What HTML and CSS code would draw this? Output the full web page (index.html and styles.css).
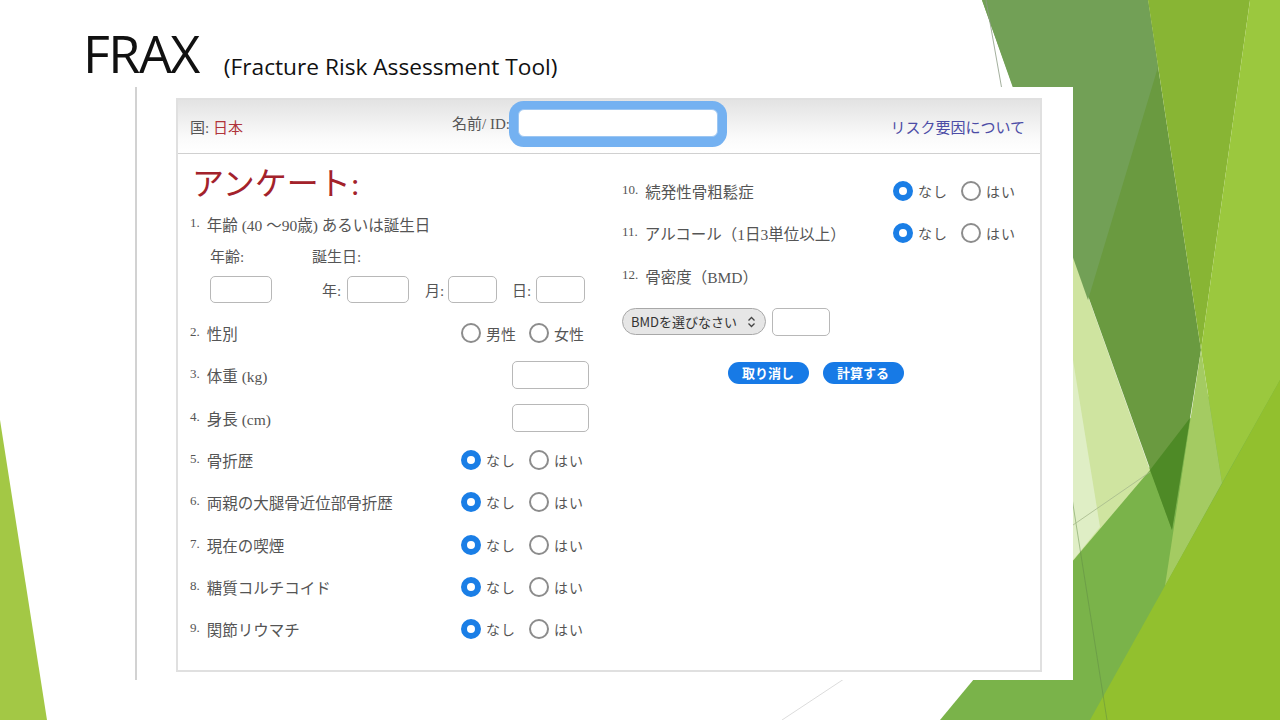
FILE: index.html
```html
<!DOCTYPE html>
<html lang="ja">
<head>
    <meta charset="UTF-8">
    <meta name="viewport" content="width=device-width, initial-scale=1.0">
    <title>FRAX</title>
    <link rel="stylesheet" href="styles.css">
</head>
<body>
<div class="slide">

    <!-- slide theme shapes -->
    <svg class="deco" width="1280" height="720" viewBox="0 0 1280 720">
        <polygon points="0,420 47,720 0,720" fill="#a3c845"/>
        <polygon points="940,720 1280,310 1280,720" fill="#7ab34a"/>
        <polygon points="1060,218 1150,470 1060,576" fill="#cfe4a0"/>
        <polygon points="1073,360 1100,527 1073,560" fill="#dfeec5"/>
        <polygon points="982,0 1148,0 1201,350 1172,530" fill="#6a9a40"/>
        <polygon points="982,0 1148,0 1158,67 1088,300" fill="#72a056"/>
        <polygon points="1150,470 1190,418 1172,530" fill="#4e8a26"/>
        <polygon points="1148,0 1250,0 1201,350" fill="#88b534"/>
        <polygon points="1250,0 1280,0 1280,380 1222,483 1201,350" fill="#9bc83e"/>
        <polygon points="1201,350 1222,483 1165,586" fill="#a4cb62"/>
        <polygon points="1090,720 1280,380 1280,720" fill="#92c02e"/>
        <line x1="986" y1="0" x2="1002" y2="90" stroke="#8c9a84" stroke-width="0.8"/>
        <line x1="1066" y1="460" x2="1107" y2="720" stroke="#5f8a45" stroke-width="0.8" stroke-opacity="0.6"/>
        <line x1="1060" y1="534" x2="1150" y2="472" stroke="#a6b98c" stroke-width="0.8"/>
        <line x1="782" y1="720" x2="850" y2="675" stroke="#dcdcdc" stroke-width="1"/>
    </svg>

    <div class="slide-title">
        <span class="frax">FRAX</span><span class="subtitle">(Fracture Risk Assessment Tool)</span>
    </div>

    <div class="shot">
        <div class="panel">
            <div class="panel-head">
                <div class="country">国: <span class="red">日本</span></div>
                <div class="name">
                    <span>名前/ ID:</span>
                    <input type="text" class="name-input">
                </div>
                <a class="risk">リスク要因について</a>
            </div>

            <div class="panel-body">
                <!-- left column -->
                <div class="col col-left">
                    <div class="survey-title">アンケート:</div>

                    <div class="q q1"><span class="label"><span class="num">1.</span>年齢 (40 〜90歳) あるいは誕生日</span></div>
                    <div class="sub-labels">
                        <span class="age-label">年齢:</span>
                        <span>誕生日:</span>
                    </div>
                    <div class="date-row">
                        <span class="box w62"></span>
                        <span class="dl dl-year">年:</span><span class="box w62"></span>
                        <span class="dl dl-month">月:</span><span class="box w49"></span>
                        <span class="dl dl-day">日:</span><span class="box w49"></span>
                    </div>

                    <div class="rows">
                        <div class="q">
                            <span class="label"><span class="num">2.</span>性別</span>
                            <div class="choices big">
                                <span class="choice"><span class="radio"></span>男性</span>
                                <span class="choice"><span class="radio"></span>女性</span>
                            </div>
                        </div>
                        <div class="q">
                            <span class="label"><span class="num">3.</span>体重 (kg)</span>
                            <span class="box w77"></span>
                        </div>
                        <div class="q">
                            <span class="label"><span class="num">4.</span>身長 (cm)</span>
                            <span class="box w77"></span>
                        </div>
                        <div class="q">
                            <span class="label"><span class="num">5.</span>骨折歴</span>
                            <div class="choices">
                                <span class="choice"><span class="radio on"></span>なし</span>
                                <span class="choice"><span class="radio"></span>はい</span>
                            </div>
                        </div>
                        <div class="q">
                            <span class="label"><span class="num">6.</span>両親の大腿骨近位部骨折歴</span>
                            <div class="choices">
                                <span class="choice"><span class="radio on"></span>なし</span>
                                <span class="choice"><span class="radio"></span>はい</span>
                            </div>
                        </div>
                        <div class="q">
                            <span class="label"><span class="num">7.</span>現在の喫煙</span>
                            <div class="choices">
                                <span class="choice"><span class="radio on"></span>なし</span>
                                <span class="choice"><span class="radio"></span>はい</span>
                            </div>
                        </div>
                        <div class="q">
                            <span class="label"><span class="num">8.</span>糖質コルチコイド</span>
                            <div class="choices">
                                <span class="choice"><span class="radio on"></span>なし</span>
                                <span class="choice"><span class="radio"></span>はい</span>
                            </div>
                        </div>
                        <div class="q">
                            <span class="label"><span class="num">9.</span>関節リウマチ</span>
                            <div class="choices">
                                <span class="choice"><span class="radio on"></span>なし</span>
                                <span class="choice"><span class="radio"></span>はい</span>
                            </div>
                        </div>
                    </div>
                </div>

                <!-- right column -->
                <div class="col col-right">
                    <div class="q">
                        <span class="label"><span class="num">10.</span>続発性骨粗鬆症</span>
                        <div class="choices">
                            <span class="choice"><span class="radio on"></span>なし</span>
                            <span class="choice"><span class="radio"></span>はい</span>
                        </div>
                    </div>
                    <div class="q">
                        <span class="label"><span class="num">11.</span>アルコール（1日3単位以上）</span>
                        <div class="choices">
                            <span class="choice"><span class="radio on"></span>なし</span>
                            <span class="choice"><span class="radio"></span>はい</span>
                        </div>
                    </div>
                    <div class="q">
                        <span class="label"><span class="num">12.</span>骨密度（BMD）</span>
                    </div>

                    <div class="bmd-row">
                        <div class="bmd-select">
                            <span>BMDを選びなさい</span>
                            <svg width="9" height="12" viewBox="0 0 9 12"><path d="M1.5 4.5 L4.5 1.5 L7.5 4.5 M1.5 7.5 L4.5 10.5 L7.5 7.5" fill="none" stroke="#444" stroke-width="1.3"/></svg>
                        </div>
                        <span class="box w58"></span>
                    </div>

                    <div class="actions">
                        <button class="btn">取り消し</button>
                        <button class="btn">計算する</button>
                    </div>
                </div>
            </div>
        </div>
    </div>
</div>
</body>
</html>
```

FILE: styles.css
```css
body {
    margin: 0;
    padding: 0;
    background-color: #fff;
}
.slide {
    width: 1280px;
    height: 720px;
    position: relative;
    overflow: hidden;
    background-color: #fff;
    font-family: "Liberation Serif", "Noto Sans CJK JP", serif;
}
.deco {
    position: absolute;
    left: 0;
    top: 0;
}
.slide-title {
    position: relative;
    height: 87px;
    box-sizing: border-box;
    padding: 22px 0 0 83px;
    font-family: "Open Sans", Lato, sans-serif;
    font-size: 52px;
    line-height: 62px;
    color: #111;
    white-space: nowrap;
}
.frax {
    letter-spacing: -1.5px;
}
.subtitle {
    font-size: 22.7px;
    margin-left: 25px;
    vertical-align: -2px;
}
.shot {
    position: relative;
    margin-left: 135px;
    width: 938px;
    height: 593px;
    box-sizing: border-box;
    border-left: 2px solid #d2d2d2;
    background-color: #fff;
    padding: 11px 0 0 39px;
}
.panel {
    width: 866px;
    height: 574px;
    box-sizing: border-box;
    border: 2px solid #e0e0e0;
}
.panel-head {
    height: 54px;
    box-sizing: border-box;
    border-bottom: 1px solid #d0d0d0;
    background: linear-gradient(#e3e3e3, #fafafa 70%, #fff);
    display: grid;
    grid-template-columns: 262px auto 1fr;
    align-items: center;
    padding: 0 15px 0 12px;
    font-size: 15px;
    color: #555;
}
.red {
    color: #b0343a;
}
.name {
    display: flex;
    align-items: center;
    margin-bottom: 8px;
}
.name-input {
    width: 200px;
    height: 28px;
    box-sizing: border-box;
    margin: 0 0 0 8px;
    border: 1px solid #9cc6f2;
    border-radius: 6px;
    background: #fff;
    box-shadow: 0 1px 0 9px #74b1f1;
    outline: none;
}
.risk {
    justify-self: end;
    color: #4c4ca6;
    text-decoration: none;
}
.panel-body {
    display: grid;
    grid-template-columns: 399px 399px;
    column-gap: 33px;
    padding-left: 12px;
    color: #555;
    font-size: 15.5px;
}
.survey-title {
    font-size: 32px;
    line-height: 40px;
    color: #a3222b;
    margin: 10px 0 0 2px;
}
.q {
    display: flex;
    align-items: center;
    justify-content: space-between;
    height: 42.3px;
}
.q1 {
    height: 28px;
    margin-top: 6px;
}
.num {
    font-size: 13px;
    vertical-align: 4px;
    margin-right: 7px;
}
.sub-labels {
    display: flex;
    height: 24px;
    align-items: center;
    margin-top: 5px;
    padding-left: 20px;
    font-size: 15px;
}
.age-label {
    width: 102px;
}
.date-row {
    display: flex;
    align-items: center;
    margin-top: 9px;
    padding-left: 20px;
    font-size: 15px;
}
.dl {
    width: 25px;
}
.dl-year {
    margin-left: 50px;
}
.dl-month {
    margin-left: 16px;
    width: 23px;
}
.dl-day {
    margin-left: 15px;
    width: 24px;
}
.rows {
    margin-top: 9px;
}
.box {
    display: inline-block;
    height: 28px;
    box-sizing: border-box;
    border: 1px solid #b8b8b8;
    border-radius: 5px;
    background: #fff;
}
.date-row .box {
    height: 27px;
}
.w49 { width: 49px; }
.w58 { width: 58px; }
.w62 { width: 62px; }
.w77 { width: 77px; }
.choices {
    display: flex;
    width: 128px;
    font-size: 14px;
    letter-spacing: 1px;
}
.choices.big {
    font-size: 15px;
    letter-spacing: 0;
}
.choice {
    display: flex;
    align-items: center;
    gap: 5px;
}
.choice:first-child {
    width: 68px;
}
.radio {
    width: 20px;
    height: 20px;
    box-sizing: border-box;
    border: 2px solid #8c8c8c;
    border-radius: 50%;
    background: #fff;
    flex: none;
}
.radio.on {
    border: 6px solid #1a7ee6;
}
.col-right {
    padding-top: 16px;
}
.bmd-row {
    display: flex;
    align-items: center;
    gap: 6px;
    margin-top: 11px;
}
.bmd-select {
    width: 144px;
    height: 27px;
    box-sizing: border-box;
    border: 1px solid #a8a8a8;
    border-radius: 14px;
    background: #e6e6e6;
    display: flex;
    align-items: center;
    justify-content: space-between;
    padding: 0 9px 0 8px;
    font-family: "Noto Sans CJK JP", sans-serif;
    font-size: 13px;
    color: #333;
}
.actions {
    display: flex;
    justify-content: center;
    gap: 14px;
    margin-top: 26px;
    padding-right: 12px;
}
.btn {
    width: 81px;
    height: 22px;
    border: none;
    border-radius: 11px;
    background-color: #177ae6;
    color: #fff;
    font-family: "Noto Sans CJK JP", sans-serif;
    font-size: 13px;
    font-weight: bold;
    display: flex;
    align-items: center;
    justify-content: center;
    padding: 0;
}
```
